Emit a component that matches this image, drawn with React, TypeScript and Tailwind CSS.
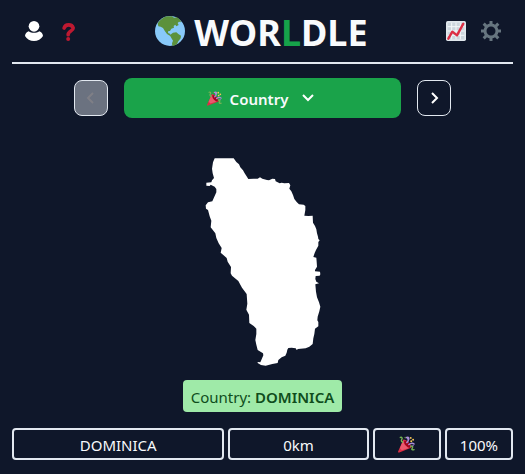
import React from "react";

function Party({ className }: { className: string }) {
  return (
    <svg viewBox="0 0 36 36" className={className} aria-label="Party popper" role="img">
      <path fill="#dd2e44" d="M11.6 7.6c-.2.2-.3.4-.4.6L.2 33c-.5 1.2.4 2.5 2.6 2L27.8 24.9c1.8-1-.5-6.5-5.5-11.500S12.500 6.500 11.600 7.600z" />
      <path fill="#ea596e" d="M11 9 4 26l4 4 14-4-8-8z" />
      <path fill="#a0041e" d="M13 13c.6 4.600 5 10 12 12 3-.3 1-6-3-10.500S12.500 8 13 13z" />
      <path fill="none" stroke="#aa8dd8" strokeWidth="3" strokeLinecap="round" d="M18.600 14c5-4 3.400-7 1.400-9.500M17 3.500c4-2 7-.5 5.500 4M23 18c4-3 8-4 11-1" />
      <path fill="none" stroke="#77b255" strokeWidth="3" strokeLinecap="round" d="M5 3c3-1 5 1 3 4s0 5 2 6M27 22c4-2 5 1 3 4s1 4 4 3" />
      <g fill="#fdcb58">
        <circle cx="27" cy="4" r="2" /><circle cx="32" cy="8" r="2" /><circle cx="28" cy="11" r="2" />
      </g>
      <circle cx="15" cy="3" r="1.5" fill="#5c913b" />
      <circle cx="32" cy="20" r="1.5" fill="#9266cc" />
    </svg>
  );
}

function Globe() {
  return (
    <svg viewBox="0 0 90 90" className="size-[30px]" aria-hidden="true">
      <circle cx="45" cy="45" r="45" fill="#88c9f9" />
      <path fill="#5c913b" d="M8 22C15 11 26 3 37 1l14 0 6 4 9-1 9 7 3 8-6-2-4 4 3 6-7 4-3-5-5 4 1 5-8 3-4 7-5 0-1 6 6 2 3 5 3 3-4 0-11-7-7-10-5-8-7-4-7-1z" />
      <path fill="#5c913b" d="M48 55l6-5 10-1 6 5 8 5-1 8-7 9-4 8-9 5-5 0-1-7 3-8-5-8-3-6z" />
    </svg>
  );
}

const island =
  "M59 25 L116 25 L124 36 L132 43 L136 52 L144 61 L149 70 L160 87 L176 86 L188 86 L195 82 L202 86 L216 90 L222 91 L232 86 L240 87 L242 94 L254 100 L260 98 L268 100 L282 99 L286 106 L283 116 L289 124 L294 135 L298 147 L305 156 L312 163 L326 164 L331 168 L331 180 L328 197 L340 198 L353 197 L354 218 L360 228 L364 238 L366 250 L369 260 L370 267 L374 271 L370 276 L370 287 L363 300 L359 309 L355 321 L364 323 L365 335 L366 350 L360 360 L360 364 L375 365 L376 373 L374 377 L362 378 L361 387 L364 395 L372 400 L361 403 L363 425 L366 442 L372 457 L376 470 L373 484 L368 500 L367 511 L370 516 L370 529 L360 536 L358 552 L355 565 L353 582 L343 590 L332 595 L309 597 L305 600 L302 595 L290 593 L280 594 L277 599 L275 608 L271 617 L260 622 L250 630 L248 639 L232 642 L212 647 L198 645 L188 639 L188 636 L196 637 L199 630 L205 616 L204 610 L188 600 L184 584 L181 570 L184 552 L184 536 L176 528 L163 519 L162 494 L154 479 L157 461 L155 432 L141 413 L130 393 L111 377 L107 370 L108 351 L98 335 L95 324 L77 308 L80 294 L71 280 L64 264 L61 250 L47 232 L49 212 L44 199 L39 180 L33 176 L32 166 L39 157 L52 154 L59 138 L64 127 L64 117 L59 110 L47 104 L44 108 L34 107 L34 98 L49 97 L51 91 L57 84 L53 70 L51 56 L54 37 Z";

const cell = "flex h-8 items-center justify-center rounded border-2 border-slate-200 pt-0.5";

export default function App() {
  return (
    <main className="min-h-screen bg-[#0f172a] px-3 pb-3 font-['Noto_Sans','Open_Sans',sans-serif] text-[15px] leading-6 text-slate-50">
      <header className="flex h-16 items-center justify-between border-b-2 border-slate-200">
        <div className="flex items-center gap-4 pl-[13px] pr-0.5">
          <button type="button" aria-label="Profile">
            <svg viewBox="0 0 54 60" className="h-5 w-[18px]" fill="white">
              <circle cx="27" cy="16" r="16" />
              <path d="M11 31c9 6 23 6 32 0 6 2 11 8 11 14-5 9-16 15-27 15S5 54 0 45c0-6 5-12 11-14z" />
            </svg>
          </button>
          <button type="button" aria-label="Help" className="pl-[3px]">
            <svg viewBox="0 0 38 57" className="h-[19px] w-[13px]">
              <path d="M6 18a14 13 0 0 1 27 0c0 10-15 8-15 20" fill="none" stroke="#be1931" strokeWidth="11" strokeLinecap="round" />
              <circle cx="18" cy="51" r="6" fill="#be1931" />
            </svg>
          </button>
        </div>
        <div className="flex items-center gap-[9px]">
          <Globe />
          <h1 className="pt-1 text-4xl font-bold">WOR<span className="text-[#16a34a]">L</span>DLE</h1>
        </div>
        <div className="flex items-center gap-[15px] pr-3">
          <button type="button" aria-label="Statistics">
            <svg viewBox="0 0 60 60" className="size-5">
              <rect width="60" height="60" rx="5" fill="#e1e8ed" />
              <path d="M5 5h50v50H5z" fill="#ccd6dd" />
              <path d="M5 17h50M5 30h50M5 43h50M17 5v50M30 5v50M43 5v50" stroke="#f5f8fa" strokeWidth="3" />
              <path d="M7 53l12-21 14 11L52 8" fill="none" stroke="#dd2e44" strokeWidth="7" strokeLinejoin="round" strokeLinecap="round" />
            </svg>
          </button>
          <button type="button" aria-label="Settings">
            <svg viewBox="0 0 60 60" className="size-5" fill="none" stroke="#66757f">
              <circle cx="30" cy="30" r="18" strokeWidth="9" />
              <path d="M30 0v11M30 49v11M0 30h11M49 30h11M8 8l9 9M43 43l9 9M52 8l-9 9M17 43l-9 9" strokeWidth="9" />
            </svg>
          </button>
        </div>
      </header>

      <nav className="mt-3.5 flex items-center gap-4 px-[62px]">
        <button type="button" disabled aria-label="Previous round" className="flex h-9 w-[34px] items-center justify-center rounded-lg border border-slate-200 bg-[#6b7280]">
          <svg viewBox="0 0 12 12" className="size-3" fill="none" stroke="#7f7f86" strokeWidth="2"><path d="M8 1 3 6l5 5" /></svg>
        </button>
        <button type="button" className="flex h-10 flex-1 items-center justify-center rounded-lg bg-[#1aa34a] pr-1 font-semibold">
          <Party className="mr-2 size-[15px]" />
          <span className="pt-0.5">Country</span>
          <svg viewBox="0 0 12 12" className="ml-3.5 size-3" fill="none" stroke="white" strokeWidth="2"><path d="m1 3 5 5 5-5" /></svg>
        </button>
        <button type="button" aria-label="Next round" className="flex h-9 w-[34px] items-center justify-center rounded-lg border border-slate-200">
          <svg viewBox="0 0 12 12" className="size-3" fill="none" stroke="white" strokeWidth="2"><path d="m4 1 5 5-5 5" /></svg>
        </button>
      </nav>

      <svg viewBox="-6 24 420 624" className="mx-auto mt-10 block h-52" role="img" aria-label="Country outline">
        <path d={island} fill="white" />
      </svg>

      <p className="mx-auto mt-3.5 w-fit rounded bg-[#9feaa8] px-2 pt-[5px] pb-[3px] text-[#0f4d1c]">
        Country: <strong className="font-semibold">DOMINICA</strong>
      </p>

      <div className="mt-4 grid grid-cols-7 gap-1">
        <div className={`${cell} col-span-3`}>DOMINICA</div>
        <div className={`${cell} col-span-2`}>0km</div>
        <div className={cell}><Party className="mb-0.5 size-[17px]" /></div>
        <div className={cell}>100%</div>
      </div>
    </main>
  );
}
